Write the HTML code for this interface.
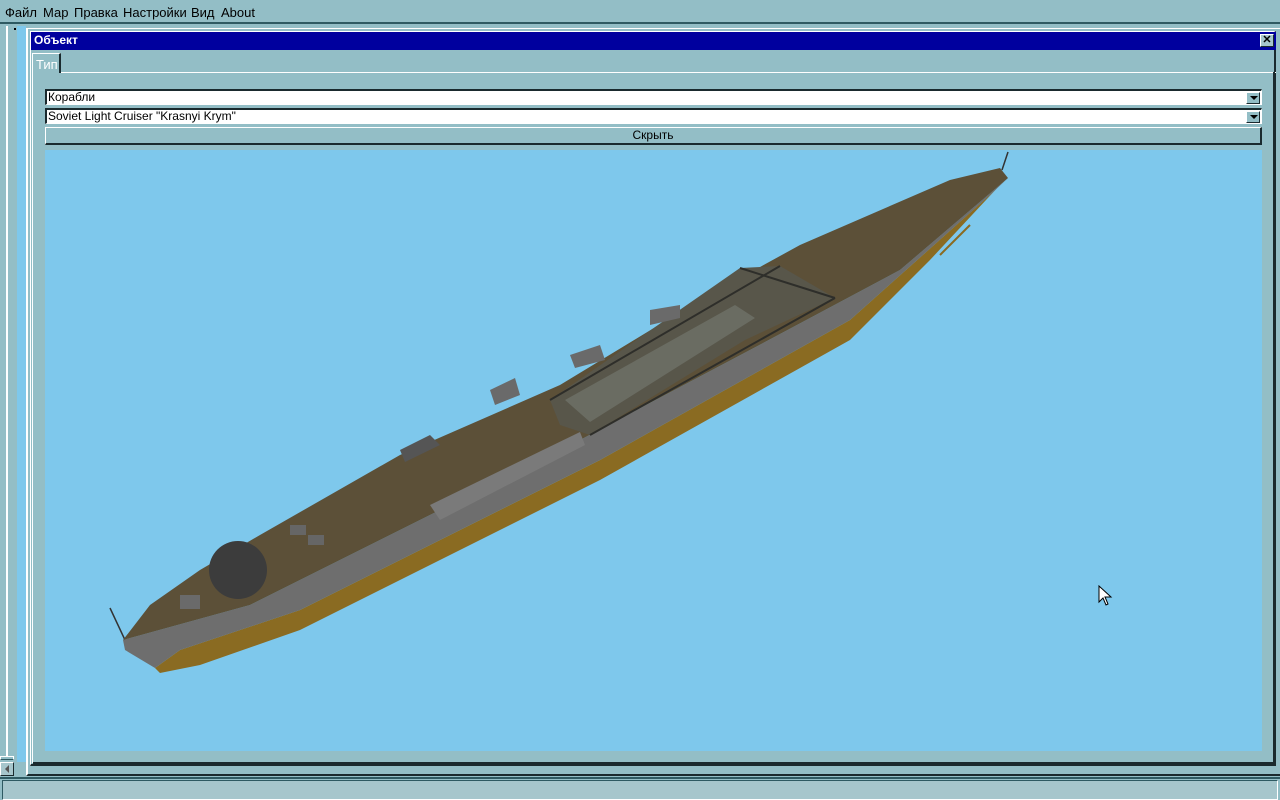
<!DOCTYPE html>
<html><head><meta charset="utf-8"><style>
*{margin:0;padding:0;box-sizing:border-box}
body{width:1280px;height:800px;overflow:hidden;background:#93bec6;font-family:"Liberation Sans",sans-serif;font-size:12px;position:relative}
.a{position:absolute}
.menu{left:0;top:0;width:1280px;height:24px;border-bottom:2px solid #2e5a62}
.menu span{position:absolute;top:5px;font-size:13px;color:#000}
.field{background:#fff;border-top:2px solid #1a2a2e;border-left:2px solid #1a2a2e;border-bottom:1px solid #fff;border-right:1px solid #fff;font-size:12px;padding-left:1px;line-height:13px}
.dd{position:absolute;right:1px;top:1px;width:14px;height:12px;background:#93bec6;border:1px solid #fff;border-right-color:#1a2a2e;border-bottom-color:#1a2a2e}
.dd:after{content:"";position:absolute;left:3px;top:3px;border-left:4px solid transparent;border-right:4px solid transparent;border-top:4px solid #000}
</style></head><body>
<div class="a menu">
<span style="left:5px">Файл</span><span style="left:43px">Мар</span><span style="left:74px">Правка</span><span style="left:123px">Настройки</span><span style="left:191px">Вид</span><span style="left:221px">About</span>
</div>
<!-- left strip -->
<div class="a" style="left:17px;top:26px;width:9px;height:736px;background:#7ec8ec"></div>
<div class="a" style="left:6px;top:26px;width:2px;height:730px;background:#fff"></div>
<div class="a" style="left:14px;top:28px;width:2px;height:2px;background:#000"></div>
<div class="a" style="left:0;top:756px;width:14px;height:4px;border:1px solid #fff;border-bottom-color:#2e5a62"></div>
<div class="a" style="left:0;top:762px;width:14px;height:14px;background:#a6c6cc;border:1px solid #fff;border-right-color:#1a2a2e;border-bottom-color:#1a2a2e"></div>
<div class="a" style="left:5px;top:765px;border-top:4px solid transparent;border-bottom:4px solid transparent;border-right:4px solid #555"></div>
<!-- window -->
<div class="a" style="left:26px;top:28px;width:1254px;height:748px;border-left:2px solid #fff;border-top:1px solid #fff;border-bottom:2px solid #1a2a2e"></div>
<div class="a" style="left:30px;top:31px;width:1246px;height:735px;border:1px solid #fff;border-bottom:2px solid #1a2a2e;border-right:2px solid #1a2a2e"></div>
<div class="a" style="left:31px;top:32px;width:1245px;height:18px;background:#00009e;color:#fff;font-weight:bold;font-size:12px;line-height:17px;padding-left:3px">Объект</div>
<div class="a" style="left:1260px;top:34px;width:14px;height:13px;background:#a6c6cc;border:1px solid #fff;border-right-color:#1a2a2e;border-bottom-color:#1a2a2e;font-size:11px;font-weight:bold;line-height:11px;text-align:center">✕</div>
<!-- tab -->
<div class="a" style="left:32px;top:53px;width:29px;height:20px;border-left:1px solid #fff;border-top:1px solid #fff;border-right:2px solid #1a2a2e;color:#fff;font-size:13px;padding:3px 0 0 3px">Тип</div>
<div class="a" style="left:61px;top:72px;width:1215px;height:1px;background:#fff"></div>
<div class="a" style="left:32px;top:73px;width:1px;height:690px;background:#fff"></div>
<div class="a" style="left:1273px;top:72px;width:2px;height:690px;background:#1a2a2e"></div>
<div class="a" style="left:33px;top:762px;width:1242px;height:2px;background:#1a2a2e"></div>
<!-- fields -->
<div class="a field" style="left:45px;top:89px;width:1217px;height:16px">Корабли<div class="dd"></div></div>
<div class="a field" style="left:45px;top:108px;width:1217px;height:16px">Soviet Light Cruiser "Krasnyi Krym"<div class="dd"></div></div>
<div class="a" style="left:45px;top:127px;width:1217px;height:18px;border:1px solid #fff;border-right:2px solid #1a2a2e;border-bottom:2px solid #1a2a2e;text-align:center;line-height:15px;font-size:12px">Скрыть</div>
<!-- viewport -->
<div class="a" style="left:45px;top:150px;width:1217px;height:601px;background:#7ec8ec">
<svg width="1217" height="601" viewBox="45 150 1217 601" style="position:absolute;left:0;top:0">
<line x1="110" y1="608" x2="125" y2="640" stroke="#333" stroke-width="1.5"/>
<line x1="1002" y1="170" x2="1008" y2="152" stroke="#333" stroke-width="1.5"/>
<polygon points="155,668 180,650 300,610 600,460 850,320 990,195 1000,185 930,260 850,340 600,480 300,630 200,665 160,673" fill="#8a6b22"/>
<polygon points="123,640 250,605 400,530 580,440 750,350 900,270 1008,178 990,195 850,320 600,460 300,610 180,650 155,668 125,650" fill="#6e6e6e"/>
<polygon points="123,640 150,605 200,570 260,535 400,455 560,385 700,300 800,245 950,180 1000,168 1008,178 900,270 750,350 580,440 400,530 250,605" fill="#5c5038"/>
<polygon points="550,400 740,268 780,266 835,298 745,340 590,435 560,425" fill="#58564a"/>
<polygon points="565,400 735,305 755,318 590,422" fill="#6a6c62"/>
<path d="M550,400 L780,266 M590,435 L835,298 M740,268 L835,298" stroke="#2e2e2a" stroke-width="2" fill="none"/>
<polygon points="490,390 515,378 520,395 495,405" fill="#6a6a6a"/>
<polygon points="570,355 600,345 605,360 575,368" fill="#6a6a6a"/>
<polygon points="650,310 680,305 680,318 650,325" fill="#6a6a6a"/>
<polygon points="400,450 430,435 440,445 405,462" fill="#555"/>
<polygon points="430,505 580,432 585,445 440,520" fill="#7a7a7a"/>
<circle cx="238" cy="570" r="29" fill="#3c3c3c"/>
<rect x="180" y="595" width="20" height="14" fill="#6a6a6a"/>
<rect x="290" y="525" width="16" height="10" fill="#666"/>
<rect x="308" y="535" width="16" height="10" fill="#666"/>
<line x1="940" y1="255" x2="970" y2="225" stroke="#8a6b22" stroke-width="2"/>
</svg>
</div>
<!-- cursor -->
<svg class="a" style="left:1098px;top:585px" width="16" height="26"><path d="M1 1 L1 17 L5 13 L8 20 L10 19 L7 12 L13 12 Z" fill="#fff" stroke="#000" stroke-width="1"/></svg>
<!-- status bar -->
<div class="a" style="left:0;top:777px;width:1280px;height:23px;border-top:2px solid #2e5a62"></div>
<div class="a" style="left:2px;top:780px;width:1276px;height:20px;background:#a6c6cc;border:1px solid #2e5a62;border-right-color:#fff;border-bottom-color:#fff"></div>
</body></html>
